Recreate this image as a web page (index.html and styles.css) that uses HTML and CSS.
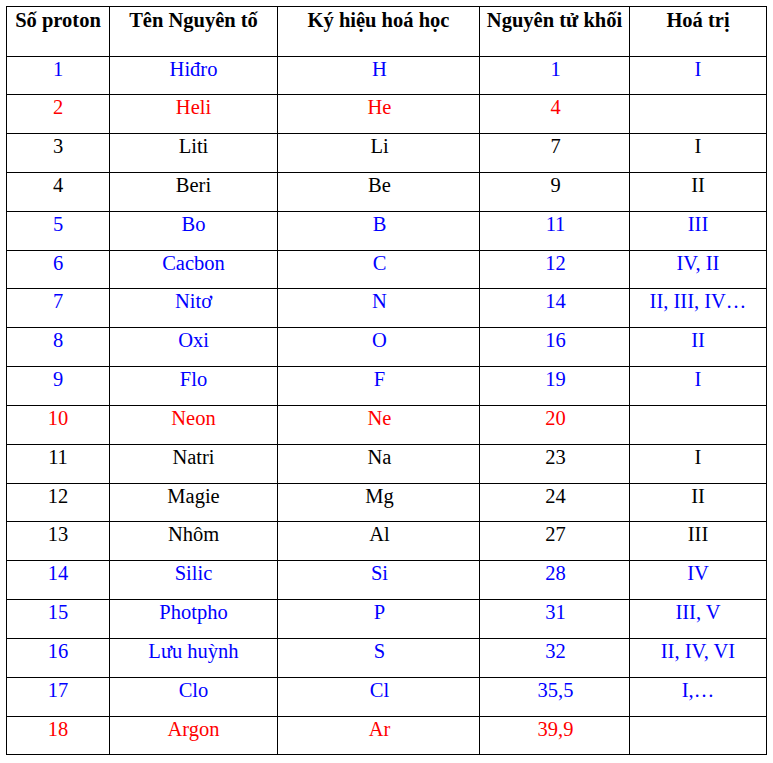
FILE: index.html
```html
<!DOCTYPE html>
<html lang="vi">
<head>
<meta charset="utf-8">
<link rel="stylesheet" href="styles.css">
</head>
<body>
<table class="tbl">
  <colgroup>
    <col class="c1"><col class="c2"><col class="c3"><col class="c4"><col class="c5">
  </colgroup>
  <thead>
    <tr class="head"><th>Số proton</th><th>Tên Nguyên tố</th><th>Ký hiệu hoá học</th><th>Nguyên tử khối</th><th>Hoá trị</th></tr>
  </thead>
  <tbody>
    <tr class="blue"><td>1</td><td>Hiđro</td><td>H</td><td>1</td><td>I</td></tr>
    <tr class="red"><td>2</td><td>Heli</td><td>He</td><td>4</td><td></td></tr>
    <tr><td>3</td><td>Liti</td><td>Li</td><td>7</td><td>I</td></tr>
    <tr><td>4</td><td>Beri</td><td>Be</td><td>9</td><td>II</td></tr>
    <tr class="blue"><td>5</td><td>Bo</td><td>B</td><td>11</td><td>III</td></tr>
    <tr class="blue"><td>6</td><td>Cacbon</td><td>C</td><td>12</td><td>IV, II</td></tr>
    <tr class="blue"><td>7</td><td>Nitơ</td><td>N</td><td>14</td><td>II, III, IV…</td></tr>
    <tr class="blue"><td>8</td><td>Oxi</td><td>O</td><td>16</td><td>II</td></tr>
    <tr class="blue"><td>9</td><td>Flo</td><td>F</td><td>19</td><td>I</td></tr>
    <tr class="red"><td>10</td><td>Neon</td><td>Ne</td><td>20</td><td></td></tr>
    <tr><td>11</td><td>Natri</td><td>Na</td><td>23</td><td>I</td></tr>
    <tr><td>12</td><td>Magie</td><td>Mg</td><td>24</td><td>II</td></tr>
    <tr><td>13</td><td>Nhôm</td><td>Al</td><td>27</td><td>III</td></tr>
    <tr class="blue"><td>14</td><td>Silic</td><td>Si</td><td>28</td><td>IV</td></tr>
    <tr class="blue"><td>15</td><td>Photpho</td><td>P</td><td>31</td><td>III, V</td></tr>
    <tr class="blue"><td>16</td><td>Lưu huỳnh</td><td>S</td><td>32</td><td>II, IV, VI</td></tr>
    <tr class="blue"><td>17</td><td>Clo</td><td>Cl</td><td>35,5</td><td>I,…</td></tr>
    <tr class="red"><td>18</td><td>Argon</td><td>Ar</td><td>39,9</td><td></td></tr>
  </tbody>
</table>
</body>
</html>
```
FILE: styles.css
```css
html, body {
  margin: 0;
  padding: 0;
  background: #ffffff;
}
body {
  padding: 6px;
  font-family: "Liberation Serif", "Times New Roman", serif;
  font-size: 20.5px;
  color: #000000;
}
.tbl {
  border-collapse: collapse;
  table-layout: fixed;
  width: 760px;
}
.c1 { width: 103px; }
.c2 { width: 168px; }
.c3 { width: 202px; }
.c4 { width: 150px; }
.c5 { width: 137px; }
.tbl th,
.tbl td {
  border: 1px solid #000000;
  text-align: center;
  vertical-align: top;
  padding: 1px 0 0 0;
  line-height: normal;
  white-space: nowrap;
  overflow: hidden;
}
.tbl th {
  font-weight: bold;
  padding-top: 2px;
}
.tbl td:nth-child(3),
.tbl td:nth-child(4) {
  padding-left: 2px;
}
.head {
  height: 49.5px;
}
.tbl tbody tr {
  height: 38.83px;
}
.blue { color: #0000ff; }
.red { color: #ff0000; }
```
